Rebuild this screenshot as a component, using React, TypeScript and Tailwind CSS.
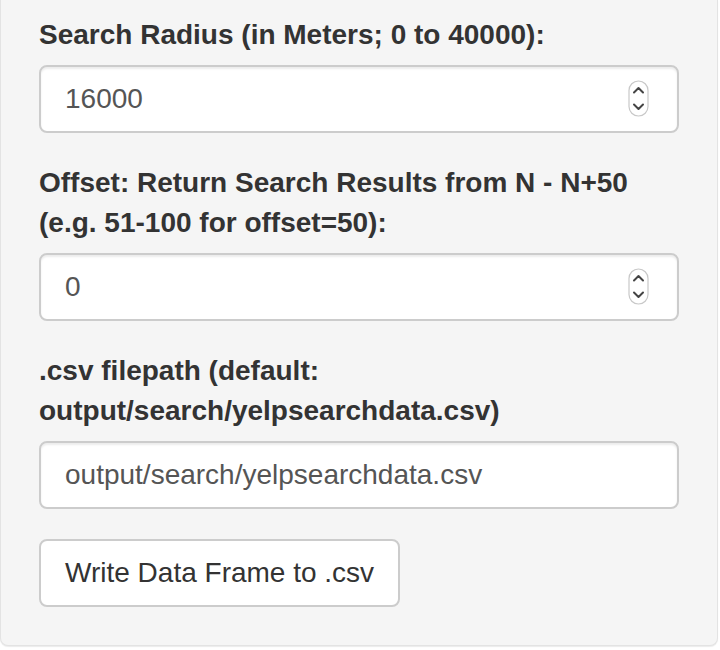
import React from "react";

const font = { fontFamily: '"Liberation Sans", Arial, Helvetica, sans-serif' };

/** Small stepper glyph drawn over number inputs */
const Spinner = () => (
  <svg
    className="pointer-events-none absolute right-[30px] top-[15px]"
    width="21"
    height="37"
    viewBox="0 0 21 37"
    fill="none"
  >
    <rect x="1" y="1" width="19" height="35" rx="9.5" fill="#fff" stroke="#c8c8c8" strokeWidth="1.2" />
    <path d="M6 12.5 L10.5 8 L15 12.5" stroke="#444" strokeWidth="2" strokeLinecap="round" strokeLinejoin="round" />
    <path d="M6 24.5 L10.5 29 L15 24.5" stroke="#444" strokeWidth="2" strokeLinecap="round" strokeLinejoin="round" />
  </svg>
);

type FieldProps = {
  label: string;
  value: string;
  number?: boolean;
};

const Field = ({ label, value, number }: FieldProps) => (
  <div className="mb-[30px] flex flex-col">
    <label className="mb-[10px] text-[28px] font-bold leading-[40px] text-[#333]">{label}</label>
    <div className="relative">
      <input
        readOnly
        type="text"
        value={value}
        style={font}
        className="h-[68px] w-full rounded-[8px] border-2 border-[#ccc] bg-white px-[24px] py-[12px] text-[28px] leading-[40px] text-[#555] shadow-[inset_0_2px_2px_rgba(0,0,0,0.075)] outline-none"
      />
      {number && <Spinner />}
    </div>
  </div>
);

export default function App() {
  return (
    <div className="min-h-[650px] bg-white" style={font}>
      <div className="w-[718px] rounded-b-[8px] border-x border-b border-[#e3e3e3] bg-[#f5f5f5] px-[38px] pb-[38px] pt-[15px] shadow-[0_1px_1px_rgba(0,0,0,0.08)]">
        <Field label="Search Radius (in Meters; 0 to 40000):" value="16000" number />
        <Field label="Offset: Return Search Results from N - N+50 (e.g. 51-100 for offset=50):" value="0" number />
        <Field label=".csv filepath (default: output/search/yelpsearchdata.csv)" value="output/search/yelpsearchdata.csv" />
        <button
          type="button"
          style={font}
          className="h-[68px] rounded-[8px] border-2 border-[#ccc] bg-white px-[24px] text-[28px] leading-[40px] text-[#333]"
        >
          Write Data Frame to .csv
        </button>
      </div>
    </div>
  );
}
